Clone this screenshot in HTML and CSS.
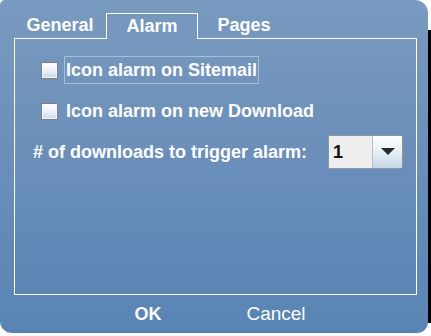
FILE: index.html
```html
<!DOCTYPE html>
<html>
<head>
<meta charset="utf-8">
<link rel="stylesheet" href="styles.css">
</head>
<body>
<div class="screen">
  <div class="window">
    <div class="tabs">
      <div class="tab">General</div>
      <div class="tab tab-selected">Alarm</div>
      <div class="tab">Pages</div>
    </div>
    <div class="panel">
      <div class="check-row">
        <span class="checkbox"></span>
        <span class="check-label focused">Icon alarm on Sitemail</span>
      </div>
      <div class="check-row">
        <span class="checkbox"></span>
        <span class="check-label">Icon alarm on new Download</span>
      </div>
      <div class="combo-row">
        <span class="combo-label"># of downloads to trigger alarm:</span>
        <div class="combo">
          <span class="combo-field">1</span>
          <span class="combo-button"><svg width="14" height="8" viewBox="0 0 14 8"><polygon points="0,0 14,0 7,7" fill="#2b2b2b"/></svg></span>
        </div>
      </div>
    </div>
    <div class="buttons">
      <span class="btn btn-ok">OK</span>
      <span class="btn btn-cancel">Cancel</span>
    </div>
  </div>
  <div class="shadow"></div>
</div>
</body>
</html>
```
FILE: styles.css
```css
html, body {
  margin: 0;
  padding: 0;
  background: #ffffff;
}
body {
  font-family: "Liberation Sans", Arial, sans-serif;
  color: #ffffff;
}
.screen {
  display: flex;
  align-items: flex-start;
  width: 431px;
  height: 336px;
}
.window {
  width: 428px;
  height: 333px;
  box-sizing: border-box;
  padding: 13px 11px 0 14px;
  background: linear-gradient(180deg, #799abf 0%, #6a8eb9 50%, #5884b4 100%);
  border-radius: 5px 13px 11px 12px;
  display: flex;
  flex-direction: column;
}
.shadow {
  width: 3px;
  height: 293px;
  margin-top: 30px;
  background: #000;
}
.tabs {
  display: flex;
  height: 25px;
  position: relative;
  z-index: 1;
}
.tab {
  width: 92px;
  box-sizing: border-box;
  height: 25px;
  font-size: 18px;
  font-weight: bold;
  line-height: 25px;
  text-align: center;
}
.tab-selected {
  border: 1px solid #ffffff;
  border-bottom: none;
  height: 26px;
  line-height: 24px;
  background: #7798be;
}
.panel {
  height: 257px;
  box-sizing: border-box;
  border: 1px solid #ffffff;
  padding-top: 17px;
  display: flex;
  flex-direction: column;
}
.check-row {
  display: flex;
  align-items: center;
  height: 28px;
  margin-left: 26px;
  margin-bottom: 13px;
  gap: 6px;
}
.checkbox {
  width: 17px;
  height: 17px;
  box-sizing: border-box;
  border: 1px solid #7b7f86;
  background: linear-gradient(180deg, #ffffff 0%, #eef3f9 45%, #c9d8ea 100%);
  box-shadow: inset 0 0 0 1px #f4f7fb;
}
.check-label {
  height: 28px;
  box-sizing: border-box;
  border: 1px solid transparent;
  padding: 0 1px;
  font-size: 18px;
  font-weight: bold;
  line-height: 26px;
  white-space: nowrap;
}
.check-label.focused {
  border-color: #a9bed7;
}
.combo-row {
  display: flex;
  align-items: center;
  margin-top: -3px;
  margin-left: 18px;
  height: 34px;
  gap: 21px;
}
.combo-label {
  font-size: 18px;
  font-weight: bold;
  white-space: nowrap;
}
.combo {
  display: flex;
  width: 75px;
  height: 34px;
  box-sizing: border-box;
  border: 1px solid #8e959c;
}
.combo-field {
  width: 44px;
  background: #eeeeee;
  border-right: 1px solid #b9bec4;
  color: #111;
  font-size: 18px;
  font-weight: bold;
  line-height: 32px;
  padding-left: 4px;
  box-sizing: border-box;
}
.combo-button {
  flex: 1;
  display: flex;
  align-items: center;
  justify-content: center;
  background: linear-gradient(180deg, #ffffff 0%, #e9f0f7 45%, #c5d6e9 100%);
}
.buttons {
  height: 38px;
  display: flex;
  align-items: center;
  justify-content: center;
  gap: 28px;
  padding-right: 7px;
}
.btn {
  width: 100px;
  text-align: center;
  font-size: 18px;
  line-height: 38px;
}
.btn-ok {
  font-weight: bold;
}
.btn-cancel {
  font-size: 19px;
}
```
